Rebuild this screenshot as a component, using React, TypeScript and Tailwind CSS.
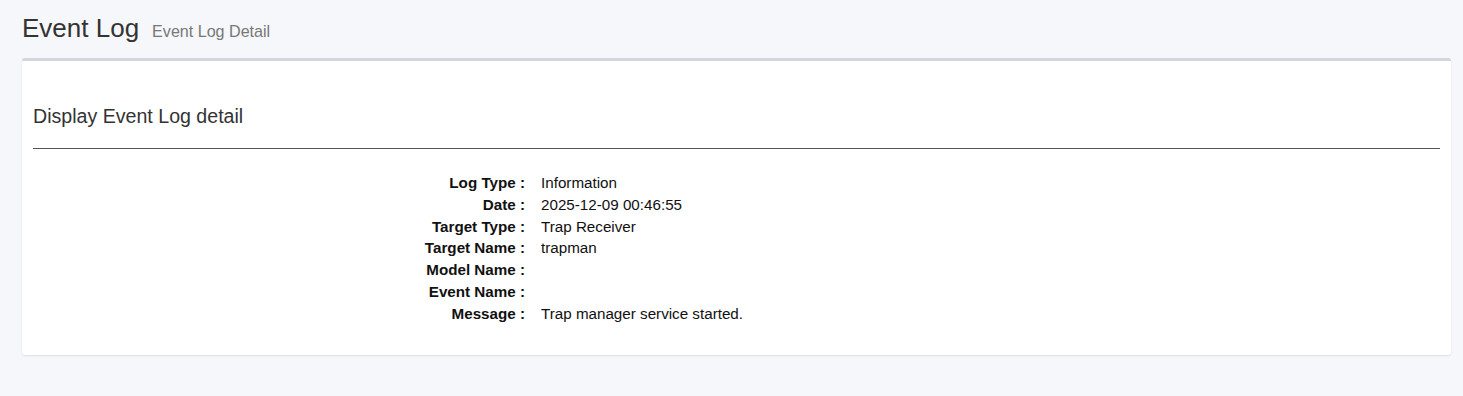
import React from "react";

const rows: [string, string][] = [
  ["Log Type", "Information"],
  ["Date", "2025-12-09 00:46:55"],
  ["Target Type", "Trap Receiver"],
  ["Target Name", "trapman"],
  ["Model Name", ""],
  ["Event Name", ""],
  ["Message", "Trap manager service started."],
];

export default function App() {
  return (
    <div
      className="min-h-[396px] bg-[#f6f7fa] pl-[22px] pr-[12px] pt-[13px] pb-[20px] text-[#333]"
      style={{ fontFamily: '"Liberation Sans", Arial, sans-serif' }}
    >
      <div className="flex items-baseline h-[30px]">
        <h1 className="text-[26px] leading-[30px] text-[#333]">Event Log</h1>
        <span className="ml-[13px] text-[16.1px] leading-[30px] text-[#777]">Event Log Detail</span>
      </div>
      <div className="mt-[15px] bg-white border-t-[3px] border-[#d2d6de] rounded-[3px] shadow-[0_1px_2px_rgba(0,0,0,0.1)] px-[11px] pt-[44px] pb-[30px]">
        <h2 className="text-[19.6px] leading-[22px] text-[#333]">Display Event Log detail</h2>
        <div className="mt-[21px] h-px bg-[#555]" />
        <div className="mt-[23px] grid grid-cols-[492px_1fr] text-[15.2px] leading-[21.8px] text-[#111]">
          {rows.map(([k, v]) => (
            <React.Fragment key={k}>
              <div className="text-right font-bold">{k} :</div>
              <div className="pl-[16px] h-[21.8px]">{v}</div>
            </React.Fragment>
          ))}
        </div>
      </div>
    </div>
  );
}
